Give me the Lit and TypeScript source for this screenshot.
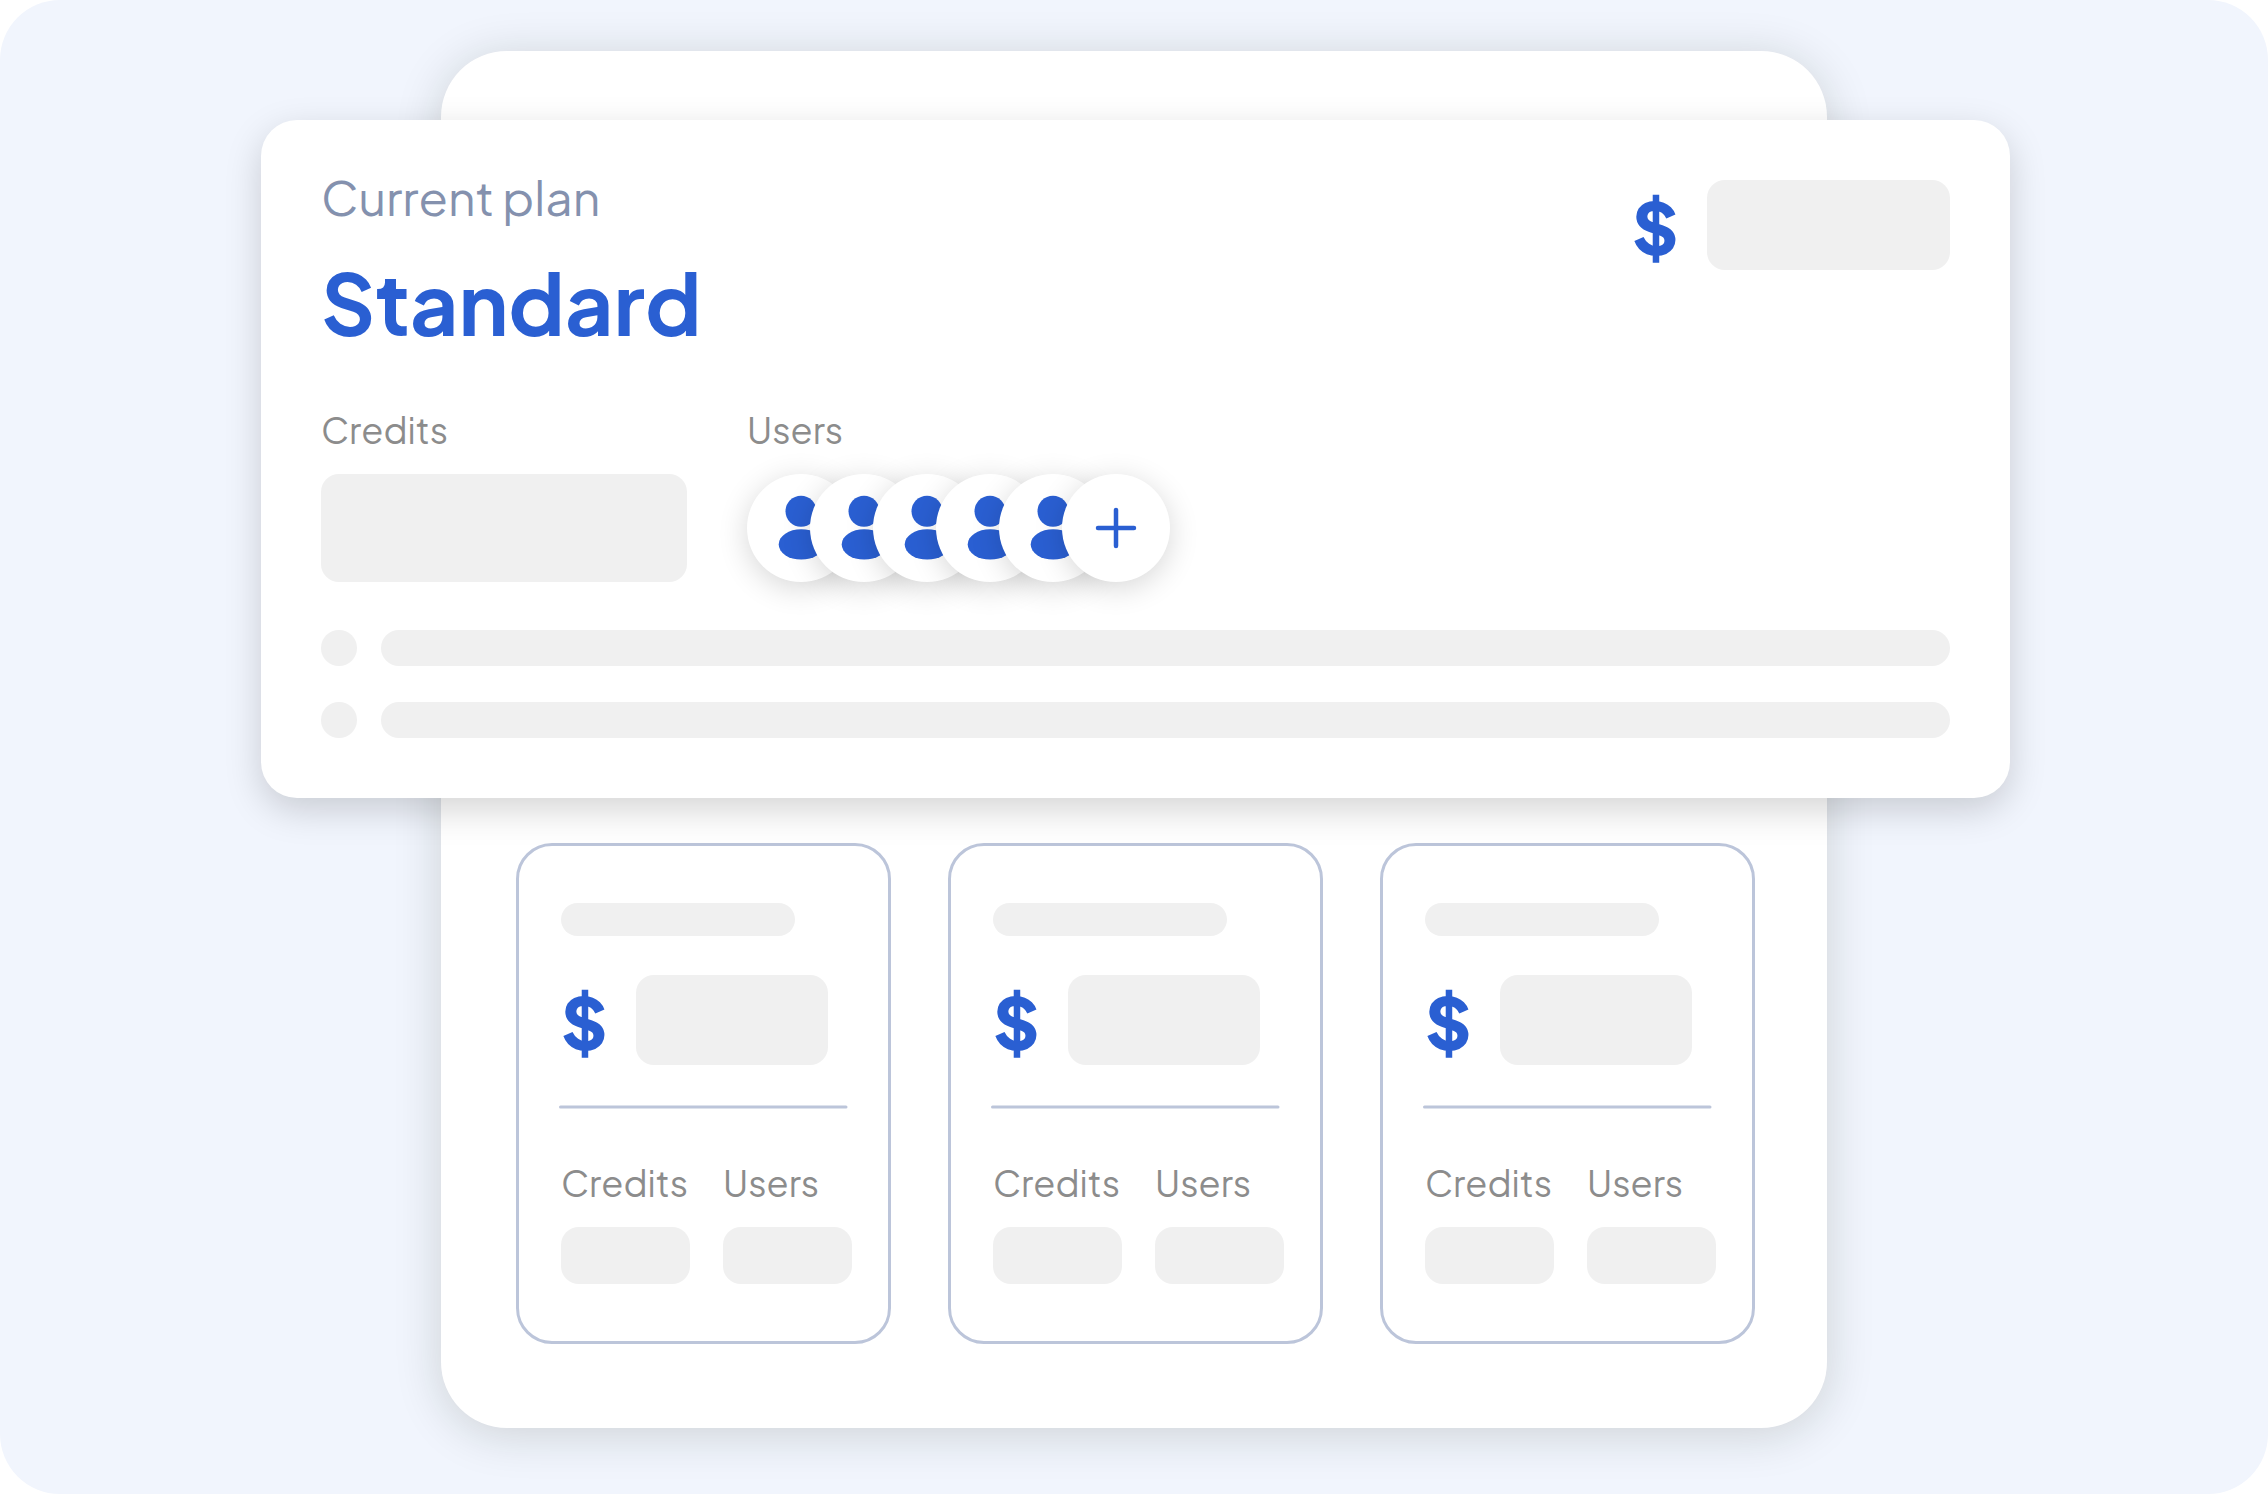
import { LitElement, html, css } from "lit";
import { customElement, property } from "lit/decorators.js";

@customElement("user-stack")
export class UserStack extends LitElement {
	static styles = css`
		:host {
			display: flex;
		}

		.avatar {
			width: 108px;
			height: 108px;
			border-radius: 50%;
			background-color: #fff;
			box-shadow: 0 6px 30px rgba(0, 0, 0, 0.16);
		}

		.avatar + .avatar {
			margin-left: -45px;
		}

		svg {
			display: block;
			fill: #2a5fd2;
		}

		.plus {
			stroke: #2a5fd2;
			stroke-width: 4.5;
			stroke-linecap: round;
		}
	`;

	@property({ type: Number })
	count = 5;

	render() {
		return html`
			${Array.from(
				{ length: this.count },
				() => html`
					<div class="avatar">
						<svg width="108" height="108" viewBox="0 0 108 108">
							<circle cx="54" cy="37.2" r="15.5" />
							<ellipse cx="54.2" cy="70.4" rx="22.5" ry="15.2" />
						</svg>
					</div>
				`
			)}
			<div class="avatar">
				<svg width="108" height="108" viewBox="0 0 108 108">
					<path class="plus" d="M54 36v36M36 54h36" />
				</svg>
			</div>
		`;
	}
}

@customElement("plan-option")
export class PlanOption extends LitElement {
	static styles = css`
		:host {
			display: flex;
			flex-direction: column;
			box-sizing: border-box;
			width: 375px;
			height: 501px;
			padding: 57px 33px 0 42px;
			border: 3px solid #bcc5da;
			border-radius: 36px;
		}

		.fill {
			background-color: #f0f0f0;
			border-radius: 18px;
		}

		.name {
			width: 234px;
			height: 33px;
		}

		.price {
			display: flex;
			height: 90px;
			margin-top: 39px;
		}

		.currency {
			width: 75px;
			color: #2a5fd2;
			font-size: 72px;
			font-weight: 800;
			line-height: 91px;
		}

		.amount {
			width: 192px;
		}

		.divider {
			display: block;
			margin: 40px 0 51px -2px;
			stroke: #bcc5da;
			stroke-width: 3;
			stroke-linecap: round;
		}

		.limits {
			display: flex;
			gap: 33px;
		}

		.limit {
			width: 129px;
			color: #8c8c8c;
			font-size: 36px;
			line-height: 45px;
		}

		.limit .fill {
			height: 57px;
			margin-top: 22px;
		}
	`;

	render() {
		return html`
			<div class="fill name"></div>
			<div class="price">
				<span class="currency">$</span>
				<div class="fill amount"></div>
			</div>
			<svg class="divider" width="290" height="4" viewBox="0 0 290 4">
				<path d="M1.5 2h285.5" />
			</svg>
			<div class="limits">
				${["Credits", "Users"].map(
					(label) => html`
						<div class="limit">
							${label}
							<div class="fill"></div>
						</div>
					`
				)}
			</div>
		`;
	}
}

@customElement("app-root")
export class App extends LitElement {
	static styles = css`
		:host {
			display: block;
			background-color: #fff;
			font-family: "Plus Jakarta Sans", Inter, sans-serif;
		}

		.page {
			position: relative;
			box-sizing: border-box;
			width: 2268px;
			height: 1494px;
			padding: 51px 0 0 441px;
			overflow: hidden;
			border-radius: 60px;
			background-color: #f1f5fd;
		}

		.panel {
			display: flex;
			align-items: flex-end;
			gap: 57px;
			box-sizing: border-box;
			width: 1386px;
			height: 1377px;
			padding: 0 0 84px 75px;
			border-radius: 66px;
			background-color: #fff;
			box-shadow: 0 6px 48px rgba(20, 32, 0, 0.16);
		}

		/* floats over the panel with the other plans */
		.current {
			position: absolute;
			top: 120px;
			left: 261px;
			box-sizing: border-box;
			width: 1749px;
			height: 678px;
			padding: 0 60px;
			border-radius: 36px;
			background-color: #fff;
			box-shadow: 0 12px 36px rgba(0, 6, 0, 0.17);
		}

		.header {
			display: flex;
			justify-content: space-between;
		}

		.caption {
			padding-top: 46px;
			color: #8491ae;
			font-size: 48px;
			line-height: 61px;
		}

		.title {
			margin-top: 22px;
			color: #2a5fd2;
			font-size: 84px;
			font-weight: 700;
			line-height: 106px;
		}

		.price {
			display: flex;
			height: 90px;
			padding-top: 60px;
		}

		.currency {
			width: 75px;
			color: #2a5fd2;
			font-size: 72px;
			font-weight: 800;
			line-height: 91px;
		}

		.fill {
			background-color: #f0f0f0;
			border-radius: 18px;
		}

		.amount {
			width: 243px;
			height: 90px;
		}

		.stats {
			display: flex;
			gap: 60px;
			margin-top: 52px;
		}

		.label {
			margin-bottom: 22px;
			color: #8c8c8c;
			font-size: 36px;
			line-height: 45px;
		}

		.credits {
			width: 366px;
			height: 108px;
		}

		.features {
			display: flex;
			flex-direction: column;
			gap: 36px;
			margin-top: 48px;
		}

		.feature {
			display: flex;
			gap: 24px;
			height: 36px;
		}

		.dot {
			width: 36px;
		}

		.bar {
			flex: 1;
		}
	`;

	render() {
		return html`
			<div class="page">
				<div class="panel">
					<plan-option></plan-option>
					<plan-option></plan-option>
					<plan-option></plan-option>
				</div>
				<div class="current">
					<div class="header">
						<div>
							<div class="caption">Current plan</div>
							<div class="title">Standard</div>
						</div>
						<div class="price">
							<span class="currency">$</span>
							<div class="fill amount"></div>
						</div>
					</div>
					<div class="stats">
						<div>
							<div class="label">Credits</div>
							<div class="fill credits"></div>
						</div>
						<div>
							<div class="label">Users</div>
							<user-stack></user-stack>
						</div>
					</div>
					<div class="features">
						${[0, 1].map(
							() => html`
								<div class="feature">
									<div class="fill dot"></div>
									<div class="fill bar"></div>
								</div>
							`
						)}
					</div>
				</div>
			</div>
		`;
	}
}
